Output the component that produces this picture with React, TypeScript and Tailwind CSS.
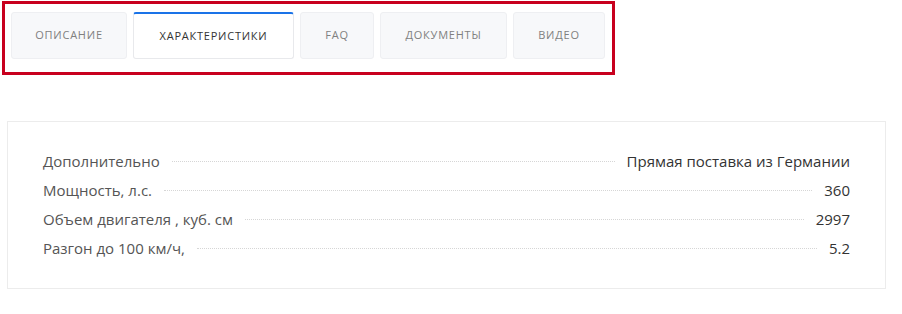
const tabs = [
  { label: "Описание", width: "w-[116px]" },
  { label: "Характеристики", width: "w-[161px]", active: true },
  { label: "FAQ", width: "w-[74px]" },
  { label: "Документы", width: "w-[127px]" },
  { label: "Видео", width: "w-[92px]" },
];

const specs = [
  { name: "Дополнительно", value: "Прямая поставка из Германии" },
  { name: "Мощность, л.с.", value: "360" },
  { name: "Объем двигателя , куб. см", value: "2997" },
  { name: "Разгон до 100 км/ч,", value: "5.2" },
];

export default function App() {
  return (
    <div
      className="min-h-screen bg-white pt-[1px] pl-[2px]"
      style={{ fontFamily: '"Open Sans", "Noto Sans", sans-serif' }}
    >
      {/* выделенная область вкладок */}
      <div className="w-[613px] border-[3px] border-[#c8001e] pt-[8px] pb-[13px] pl-[6px]">
        <div className="flex gap-[6px]">
          {tabs.map((tab) => (
            <button
              key={tab.label}
              className={`${tab.width} h-[47px] shrink-0 rounded-[3px] border text-[11px] uppercase tracking-[0.07em] ${
                tab.active
                  ? "border-[#e8e9ec] border-t-2 border-t-[#1a73e8] bg-white text-[#333]"
                  : "border-[#eeeff2] bg-[#f7f8fa] text-[#808080]"
              }`}
            >
              {tab.label}
            </button>
          ))}
        </div>
      </div>

      <div className="mt-[46px] ml-[5px] w-[879px] border border-[#ececec] bg-white px-[35px] py-[25px]">
        {specs.map((row) => (
          <div key={row.name} className="flex items-baseline text-[15px] leading-[29px]">
            <span className="text-[#555]">{row.name}</span>
            <span className="mx-3 h-0 flex-1 self-center border-b border-dotted border-[#d6d6d6]" />
            <span className="text-[#333]">{row.value}</span>
          </div>
        ))}
      </div>
    </div>
  );
}
